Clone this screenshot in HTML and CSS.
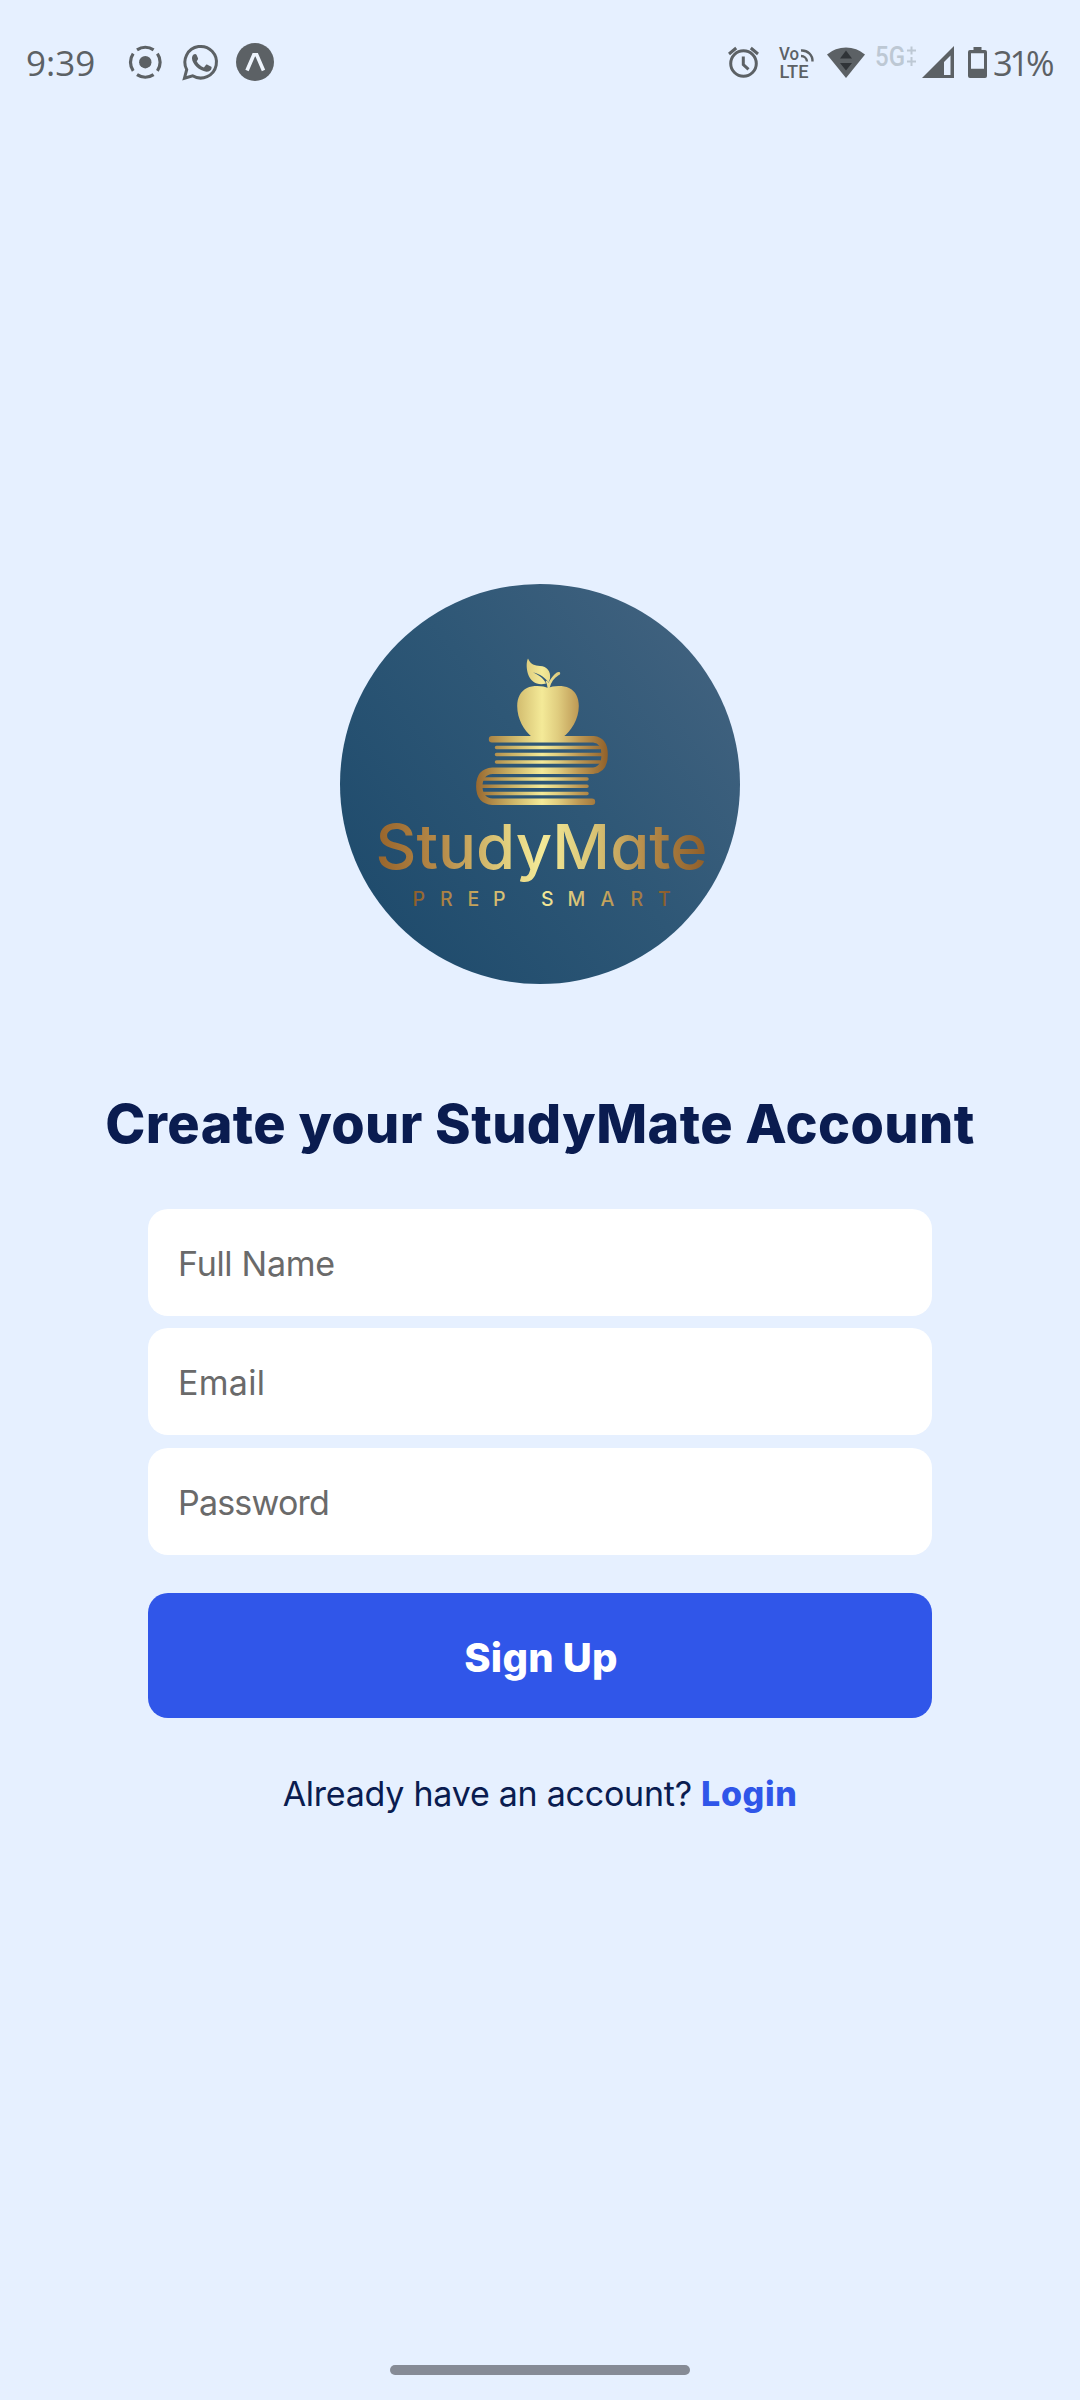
FILE: index.html
```
<!DOCTYPE html>
<html lang="en">
<head>
<meta charset="utf-8">
<title>StudyMate</title>
<link rel="stylesheet" href="styles.css">
</head>
<body>
<div class="screen">
  <header class="status-bar">
    <span class="clock">9:39</span>
    <svg class="icon" width="40" height="44" viewBox="126 40 40 44" fill="none" stroke="#5c6165" stroke-width="3.2">
      <circle cx="145.3" cy="62.2" r="6.2" fill="#5c6165" stroke="none"/>
      <path d="M137 49.8a15 15 0 0 1 16.6 0M137 74.6a15 15 0 0 0 16.6 0M133.200 53.600a15 15 0 0 0 0 17.200M157.400 53.600a15 15 0 0 1 0 17.200"/>
    </svg>
    <svg class="icon icon-chat" width="40" height="44" viewBox="180 40 40 44">
      <path d="M184.4 78.3l2.3-8.7a15.8 15.8 0 1 1 5.9 6.2z" fill="none" stroke="#5c6165" stroke-width="3"/>
      <path d="M193.6 54.5c.9-.8 2.400-.8 2.900.3l1.500 3.500c.3.800-.2 1.500-1.300 2.900 1.800 3.200 4 5 7.200 6.300l2-2.400c.4-.5.9-.6 1.500-.4l3.500 1.700c.7.300.8.8.7 1.500-.4 2.600-2.800 4-5.300 3.800-6.900-.6-14-7.500-14.300-13.100-.1-1.700.5-3.100 1.600-4.100z" fill="#5c6165"/>
    </svg>
    <svg class="icon icon-expo" width="42" height="44" viewBox="234 40 42 44">
      <circle cx="255" cy="62" r="19" fill="#5c6165"/>
      <path d="M247 70.500l6.800-15.700h2.900l6.800 15.700" fill="none" stroke="#eef4fc" stroke-width="3.600"/>
    </svg>

    <div class="status-right">
      <svg class="icon" width="36" height="44" viewBox="726 40 36 44" fill="none" stroke="#5c6165" stroke-width="3">
        <circle cx="743.500" cy="63.500" r="12.800"/>
        <path d="M743.300 56.500v8l5.200 4.800M729 54l7.200-6M758 54l-7.200-6"/>
      </svg>
      <svg class="icon icon-volte" width="40" height="44" viewBox="776 40 40 44">
        <text class="volte" x="779" y="60" textLength="20" lengthAdjust="spacingAndGlyphs">Vo</text>
        <text class="volte" x="779.500" y="77.600" textLength="29" lengthAdjust="spacingAndGlyphs">LTE</text>
        <path d="M801 50.500a10.500 10.500 0 0 1 11.500 11M801 56a6 6 0 0 1 6 5.500" fill="none" stroke="#5c6165" stroke-width="2.400"/>
      </svg>
      <svg class="icon icon-wifi" width="40" height="44" viewBox="826 40 40 44">
        <path d="M827 54.500a29 29 0 0 1 38 0L846 78z" fill="#5c6165"/>
        <path d="M840 58.500l6-8 6 8zM840 63l6 7.500 6-7.500z" fill="#2f3337"/>
      </svg>
      <svg class="icon icon-5g" width="44" height="44" viewBox="874 40 44 44">
        <text class="network" x="875" y="65.500" textLength="30" lengthAdjust="spacingAndGlyphs">5G</text>
        <path d="M907 50.500h9M911.500 46.500v8M907 61.500h9M911.500 57v9" fill="none" stroke="#bdc8d4" stroke-width="2"/>
      </svg>
      <svg class="icon icon-signal" width="34" height="44" viewBox="922 40 34 44">
        <path fill-rule="evenodd" d="M922 78L954 46v32zM944 75h6.500V55.500L944 62z" fill="#5c6165"/>
      </svg>
      <svg class="icon icon-battery" width="22" height="44" viewBox="966 40 22 44">
        <path fill-rule="evenodd" d="M973.500 47h8v3h3.500q2 0 2 2v24q0 2-2 2h-15q-2 0-2-2V52q0-2 2-2h3.500zM971 53.300v15.500h13V53.300z" fill="#5c6165"/>
      </svg>
      <span class="percent">31%</span>
    </div>
  </header>

  <main class="content">
    <svg class="logo" width="400" height="400" viewBox="340 584 400 400" role="img" aria-label="StudyMate">
      <defs>
        <linearGradient id="sea" x1="0.1" y1="0.8" x2="0.95" y2="0.15">
          <stop offset="0" stop-color="#204c6d"/>
          <stop offset="0.5" stop-color="#2e5776"/>
          <stop offset="1" stop-color="#41627f"/>
        </linearGradient>
        <linearGradient id="gold" gradientUnits="userSpaceOnUse" x1="476" y1="0" x2="608" y2="0">
          <stop offset="0" stop-color="#98682f"/>
          <stop offset="0.28" stop-color="#cdb568"/>
          <stop offset="0.5" stop-color="#f4ea98"/>
          <stop offset="0.62" stop-color="#e0cd7f"/>
          <stop offset="0.78" stop-color="#bd9854"/>
          <stop offset="1" stop-color="#90602a"/>
        </linearGradient>
        <linearGradient id="gold-name" gradientUnits="userSpaceOnUse" x1="378" y1="0" x2="706" y2="0">
          <stop offset="0" stop-color="#98652c"/>
          <stop offset="0.2" stop-color="#b88d4b"/>
          <stop offset="0.38" stop-color="#dfcb7a"/>
          <stop offset="0.5" stop-color="#f4ea98"/>
          <stop offset="0.65" stop-color="#dac677"/>
          <stop offset="0.82" stop-color="#b48a49"/>
          <stop offset="1" stop-color="#8f5e29"/>
        </linearGradient>
        <linearGradient id="gold-tag" gradientUnits="userSpaceOnUse" x1="413" y1="0" x2="671" y2="0">
          <stop offset="0" stop-color="#8f5e29"/>
          <stop offset="0.25" stop-color="#c7a75e"/>
          <stop offset="0.5" stop-color="#f4ea98"/>
          <stop offset="0.75" stop-color="#c3a25b"/>
          <stop offset="1" stop-color="#88592a"/>
        </linearGradient>
      </defs>
      <circle cx="540" cy="784" r="200" fill="url(#sea)"/>
      <g fill="url(#gold)">
        <path d="M548 688c4.500-2.300 15-3 21 0 6.500 3.200 9.800 9.500 9.800 18 0 13.500-8 25.500-15.800 31h-31c-8-6.500-14.800-18-14.800-31 0-8.500 3.500-14.800 9.800-18 6-3 16.500-2.300 21 0z"/>
        <path fill-rule="evenodd" d="M528 658.500c2.500 6 7 7.300 12 7.500 7 .5 11 5 10 12.500-.3 1.500-.8 2.700-1.500 3.800-3-4.300-8.500-8.500-15.500-9.800 6.500 2.500 11 6.500 13 11-8 2.500-15.500-1.500-18-9.500-1.500-5-2-11.500 0-15.500z"/>
        <path d="M547.500 688c-.2-2.700-.7-4.700-1.800-6.500l1.300-1 1.500 2.300c2.200-4.300 5-8 8.300-10.300 1.700-1.100 3.400-.6 3.400.8s-1 1.600-2 2.100c-4.200 2.500-7.200 6.600-8.600 12.600z"/>
      </g>
      <g fill="none" stroke="url(#gold)" stroke-linecap="round">
        <path stroke-width="6.400" d="M492 739.200h101.500q11.100 1 11.100 15.500t-11.100 16h-101q-13.200 1-13.200 15.500t13.200 15.500H592"/>
        <path stroke-width="3.500" d="M496.500 747.600H600M496.500 754.600H602M496.500 762H600M483 779.100H587M482 786.200H587M483 793.600H587"/>
      </g>
      <text class="logo-name" x="375.500" y="869" textLength="332" lengthAdjust="spacingAndGlyphs" fill="url(#gold-name)">StudyMate</text>
      <text class="logo-tag" y="905.500" fill="url(#gold-tag)" x="412.500 440 467.500 493 515 541 567.500 600.500 630.500 658">PREP SMART</text>
    </svg>

    <h1 class="title">Create your StudyMate Account</h1>

    <form class="form">
      <input class="field" type="text" placeholder="Full Name">
      <input class="field field-email" type="email" placeholder="Email">
      <input class="field field-password" type="password" placeholder="Password">
      <button class="submit" type="button">Sign Up</button>
    </form>

    <p class="login">Already have an account? <a class="login-link">Login</a></p>
  </main>

  <div class="home-bar"></div>
</div>
</body>
</html>
```
FILE: styles.css
```
* { box-sizing: border-box; }

body {
  margin: 0;
  background: #e6f0ff;
  font-family: Inter, "Liberation Sans", sans-serif;
}

.screen {
  width: 1080px;
  height: 2400px;
  display: flex;
  flex-direction: column;
  align-items: center;
  overflow: hidden;
}

.status-bar {
  width: 100%;
  height: 124px;
  padding: 0 20px 0 26px;
  display: flex;
  align-items: center;
  flex: none;
  color: #5c6165;
  font: 400 35px/44px "Open Sans", sans-serif;
}

.icon { display: block; flex: none; }
.clock { width: 100px; padding-top: 2px; }
.icon-chat, .icon-expo { margin-left: 14px; }

.status-right {
  margin-left: auto;
  display: flex;
  align-items: center;
}
.icon-volte { margin-left: 14px; }
.icon-wifi { margin-left: 10px; }
.icon-5g { margin-left: 8px; }
.icon-signal { margin-left: 4px; }
.icon-battery { margin-left: 10px; }
.percent {
  width: 67px;
  margin-left: 5px;
  padding-top: 2px;
  font-size: 34.5px;
  letter-spacing: -3.2px;
}

.volte { font: 500 18px Roboto, sans-serif; fill: #5c6165; }
.network { font: 500 27px Roboto, sans-serif; fill: #bdc8d4; }

.content {
  flex: 1;
  display: flex;
  flex-direction: column;
  align-items: center;
}

.logo { display: block; margin-top: 460px; }
.logo-name { font: 540 62px Inter, sans-serif; font-feature-settings: "cv11"; }
.logo-tag { font: 550 19.500px Inter, sans-serif; }

.title {
  margin: 106px 0 51px;
  font-size: 54px;
  line-height: 68px;
  font-weight: 800;
  letter-spacing: 0.4px;
  color: #0a1c50;
  white-space: nowrap;
}

.form {
  width: 784px;
  display: flex;
  flex-direction: column;
}

.field {
  height: 107px;
  margin: 0 0 12px;
  padding: 2px 30px 0;
  border: 0;
  border-radius: 20px;
  background: #fff;
  font: 400 34px Inter, sans-serif;
  letter-spacing: -0.3px;
}
.field::placeholder { color: #6a6a6a; opacity: 1; }
.field-email { letter-spacing: 0.3px; }
.field-password { margin: 1px 0 38px; letter-spacing: -0.8px; }

.submit {
  height: 125px;
  padding: 3px 0 0 2px;
  border: 0;
  border-radius: 20px;
  background: #3056e9;
  color: #fff;
  font: 800 40px Inter, sans-serif;
  letter-spacing: 0.2px;
}

.login {
  margin: 55px 0 0;
  font-size: 34px;
  line-height: 42px;
  letter-spacing: -0.25px;
  color: #0a1c50;
  white-space: nowrap;
}
.login-link { font-weight: 800; letter-spacing: 0.6px; color: #3056e9; }

.home-bar {
  width: 300px;
  height: 10px;
  margin-bottom: 25px;
  border-radius: 5px;
  background: #868b96;
}
```
